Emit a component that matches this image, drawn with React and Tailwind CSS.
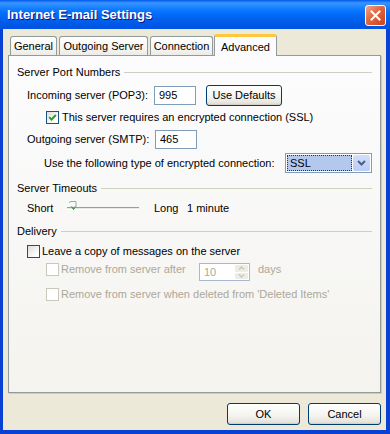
import React from 'react';

const font = "font-['Liberation_Sans',Arial,sans-serif]";

const Checkbox = ({ checked, disabled }) => (
  <span
    className={`w-[13px] h-[13px] shrink-0 border flex items-center justify-center ${
      disabled ? 'border-[#cac8bb] bg-white' : 'border-[#1c5180] bg-[linear-gradient(135deg,#dcdcd7,#ffffff_80%)]'
    }`}
  >
    {checked && (
      <svg width="9" height="9" viewBox="0 0 9 9">
        <path d="M1.2 4.2 L3.5 6.6 L7.8 2" fill="none" stroke="#21a121" strokeWidth="1.9" />
      </svg>
    )}
  </span>
);

const GroupHeader = ({ title, className = '' }) => (
  <div className={`flex items-center h-[14px] ${className}`}>
    <span>{title}</span>
    <div className="flex-1 h-px bg-[#d0d0bf] ml-[4px]" />
  </div>
);

const TextInput = ({ value, className = '' }) => (
  <div className={`h-[19px] border border-[#7f9db9] bg-white flex items-center pl-[4px] ${className}`}>{value}</div>
);

const XpButton = ({ children, className = '' }) => (
  <button
    className={`border border-[#003c74] rounded-[3px] bg-[linear-gradient(to_bottom,#ffffff,#f3f3ef_60%,#e5e4dc_90%,#d6d0c5)] shadow-[inset_0_-1px_0_#d6d0c5] flex items-center justify-center ${className}`}
  >
    {children}
  </button>
);

const Tab = ({ label, width, selected, className = '' }) =>
  selected ? (
    <div
      className={`relative z-10 h-[22px] ${width} rounded-t-[3px] border-x border-[#919b9c] border-t-[3px] border-t-[#ffc83c] bg-[#fcfcfe] flex items-start justify-center pt-[2px] ${className}`}
    >
      {label}
    </div>
  ) : (
    <div
      className={`h-[19px] mb-px ${width} rounded-t-[3px] border-x border-t border-[#919b9c] bg-[linear-gradient(to_bottom,#ffffff,#f3f3ef_70%,#ecebe6)] flex items-center justify-center ${className}`}
    >
      {label}
    </div>
  );

export default function App() {
  return (
    <div className={`w-[390px] h-[434px] flex flex-col text-[11px] text-black ${font}`}>
      {/* Title bar */}
      <div className="h-[29px] shrink-0 flex items-center pl-[7px] pr-[4px] bg-[linear-gradient(to_bottom,#0058ee,#3a93ff_10%,#288eff_18%,#127dff_30%,#036ffc_45%,#0262ee_65%,#0057e5_85%,#0054e3_95%,#0055ea)]">
        <span className="text-white font-bold text-[13px] [text-shadow:1px_1px_0_#0a1883]">
          Internet E-mail Settings
        </span>
        <button className="ml-auto mt-[1px] w-[21px] h-[21px] rounded-[3px] border border-white bg-[linear-gradient(135deg,#f0a58a,#e0653f_45%,#c7451f)] flex items-center justify-center">
          <svg width="11" height="11" viewBox="0 0 11 11">
            <path d="M1.5 1.5 L9.5 9.5 M9.5 1.5 L1.5 9.5" stroke="white" strokeWidth="2" strokeLinecap="square" />
          </svg>
        </button>
      </div>

      {/* Body */}
      <div className="flex-1 flex flex-col bg-[#ece9d8] border-l-[3px] border-r-[4px] border-b-[4px] border-[#0841d4] pl-[5px] pr-[5px] pt-[5px]">
        {/* Tabs */}
        <div className="flex items-end h-[22px] -mb-px pl-[2px]">
          <Tab label="General" width="w-[47px]" />
          <Tab label="Outgoing Server" width="w-[89px]" className="ml-[2px]" />
          <Tab label="Connection" width="w-[63px]" className="ml-[2px]" />
          <Tab label="Advanced" width="w-[63px]" selected className="ml-[1px]" />
        </div>

        {/* Panel */}
        <div className="h-[338px] border border-[#919b9c] shadow-[1px_1px_0_#d0cdbf] bg-[linear-gradient(to_bottom,#fcfcfe,#f4f3ee)] flex flex-col pl-[8px] pr-[8px] pt-[9px]">
          <GroupHeader title="Server Port Numbers" />

          <div className="flex items-center h-[21px] mt-[6px] pl-[10px]">
            <span className="w-[127px]">Incoming server (POP3):</span>
            <TextInput value="995" className="w-[42px]" />
            <XpButton className="ml-[10px] w-[76px] h-[21px]">Use Defaults</XpButton>
          </div>

          <div className="flex items-center h-[13px] mt-[5px] pl-[29px]">
            <Checkbox checked />
            <span className="ml-[3px]">This server requires an encrypted connection (SSL)</span>
          </div>

          <div className="flex items-center h-[20px] mt-[5px] pl-[10px]">
            <span className="w-[128px]">Outgoing server (SMTP):</span>
            <TextInput value="465" className="w-[42px]" />
          </div>

          <div className="flex items-center h-[20px] mt-[4px] pl-[27px]">
            <span className="w-[241px]">Use the following type of encrypted connection:</span>
            <div className="w-[87px] h-[20px] border border-[#7f9db9] bg-white flex items-center p-[1px]">
              <div className="flex-1 h-full bg-[#b4c8ec] border border-dotted border-[#333] flex items-center pl-[2px]">
                SSL
              </div>
              <div className="w-[17px] h-full ml-[1px] rounded-[2px] bg-[linear-gradient(to_bottom,#d2defb,#b9cdf6)] flex items-center justify-center">
                <svg width="9" height="6" viewBox="0 0 9 6">
                  <path d="M1 1 L4.5 4.5 L8 1" fill="none" stroke="#4d6185" strokeWidth="2" />
                </svg>
              </div>
            </div>
          </div>

          <GroupHeader title="Server Timeouts" className="mt-[8px]" />

          <div className="flex items-center h-[16px] mt-[5px] pl-[10px]">
            <span className="w-[40px]">Short</span>
            <div className="relative w-[72px] h-[12px] flex items-center">
              <div className="w-full h-[3px] border-t border-[#9d9c99] border-b border-b-white bg-[#e7e6e1]" />
              <svg className="absolute left-[1px] top-[-2px]" width="10" height="11" viewBox="0 0 10 11">
                <path d="M1.5 3 Q1.5 1.5 3 1.5 H8 V6.5 L5.5 9.5 L3 6.5" fill="none" stroke="#9aa6b4" strokeWidth="1" />
                <path d="M3.5 6.5 L5.5 9 L7.5 6.5" fill="none" stroke="#3ea13e" strokeWidth="1.2" />
              </svg>
            </div>
            <span className="ml-[15px] w-[33px]">Long</span>
            <span>1 minute</span>
          </div>

          <GroupHeader title="Delivery" className="mt-[8px]" />

          <div className="flex items-center h-[14px] mt-[6px] pl-[10px]">
            <Checkbox />
            <span className="ml-[2px]">Leave a copy of messages on the server</span>
          </div>

          <div className="flex items-start h-[18px] mt-[5px] pl-[29px] text-[#aca899]">
            <Checkbox disabled />
            <span className="ml-[2px] w-[138px] leading-[13px]">Remove from server after</span>
            <div className="w-[51px] h-[18px] border border-[#aab8cd] bg-white flex items-center">
              <span className="flex-1 pl-[4px] pt-[1px]">10</span>
              <div className="w-[15px] h-full flex flex-col p-[1px] gap-px">
                <div className="flex-1 rounded-[1px] bg-[#eeede5] flex items-center justify-center">
                  <svg width="7" height="4" viewBox="0 0 7 4">
                    <path d="M1 3.5 L3.5 1 L6 3.5" fill="none" stroke="#c9c7ba" strokeWidth="1.4" />
                  </svg>
                </div>
                <div className="flex-1 rounded-[1px] bg-[#eeede5] flex items-center justify-center">
                  <svg width="7" height="4" viewBox="0 0 7 4">
                    <path d="M1 0.5 L3.5 3 L6 0.5" fill="none" stroke="#c9c7ba" strokeWidth="1.4" />
                  </svg>
                </div>
              </div>
            </div>
            <span className="ml-[8px] leading-[13px]">days</span>
          </div>

          <div className="flex items-center h-[13px] mt-[7px] pl-[29px] text-[#aca899]">
            <Checkbox disabled />
            <span className="ml-[2px]">Remove from server when deleted from 'Deleted Items'</span>
          </div>
        </div>

        {/* Buttons */}
        <div className="flex justify-end mt-[10px]">
          <XpButton className="w-[73px] h-[22px]">OK</XpButton>
          <XpButton className="ml-[8px] w-[73px] h-[22px]">Cancel</XpButton>
        </div>
      </div>
    </div>
  );
}
